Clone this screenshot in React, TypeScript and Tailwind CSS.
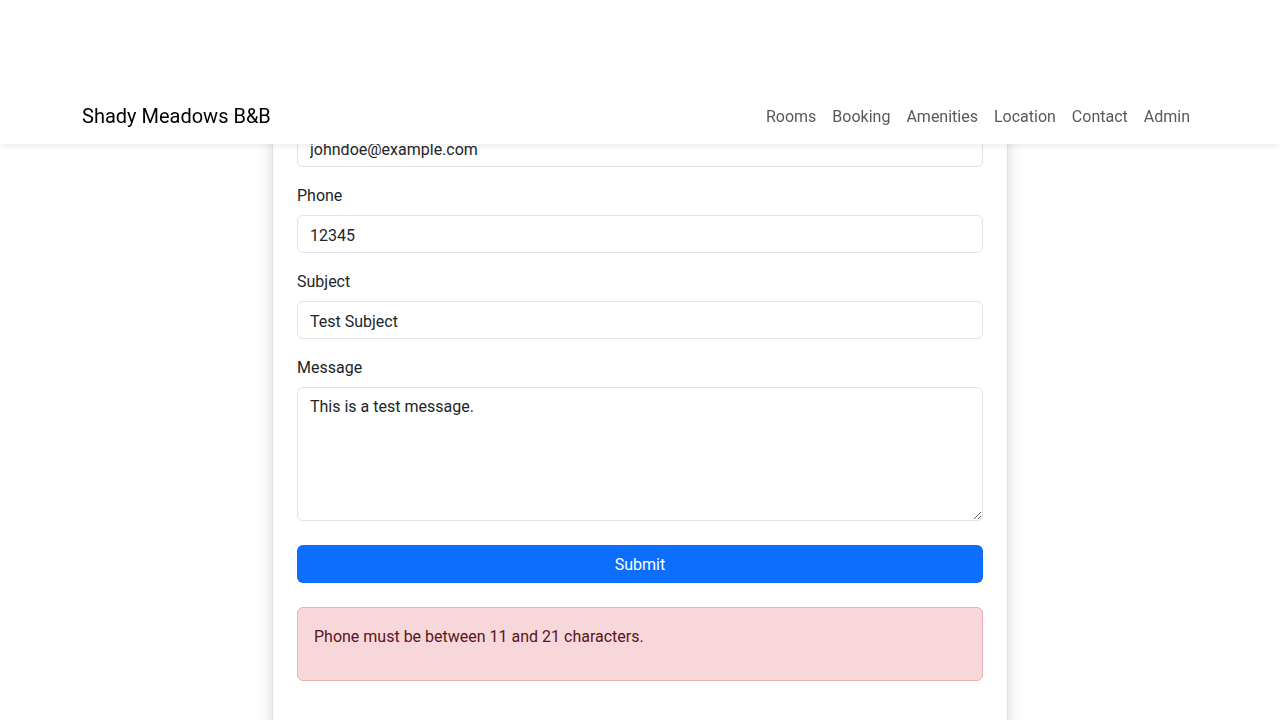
import React from "react";

const font = { fontFamily: "Roboto, 'Noto Sans', sans-serif" };

function Label({ children }: { children: React.ReactNode }) {
  return <label className="block h-6 pt-px mb-2 text-base leading-6 text-[#212529]">{children}</label>;
}

function Field({ label, value }: { label: string; value: string }) {
  return (
    <div className="mb-4">
      <Label>{label}</Label>
      <input
        readOnly
        value={value}
        className="block w-full h-[38px] px-3 pt-[7px] pb-[5px] text-base leading-6 text-[#212529] bg-white border border-[#dee2e6] rounded-md outline-none"
      />
    </div>
  );
}

export default function App() {
  return (
    <div className="min-h-screen bg-white text-[#212529]" style={font}>
      <nav className="fixed top-0 left-0 right-0 z-10 h-[144px] bg-white shadow-[0_2px_6px_rgba(0,0,0,0.08)]">
        <div className="mx-auto w-[1140px] px-3 h-full flex items-end pb-[13px] justify-between">
          <span className="text-[20px] leading-[30px] text-black">Shady Meadows B&amp;B</span>
          <ul className="flex items-center mb-[2px]">
            {["Rooms", "Booking", "Amenities", "Location", "Contact", "Admin"].map((l) => (
              <li key={l} className="px-2 text-base leading-6 text-[#595959]">
                {l}
              </li>
            ))}
          </ul>
        </div>
      </nav>
      <main className="pt-[72px]">
        <div className="mx-auto w-[736px] bg-white border border-[#dee2e6] rounded-md shadow-[0_8px_16px_rgba(0,0,0,0.15)] p-6 pb-10">
          <Field label="Email" value="johndoe@example.com" />
          <Field label="Phone" value="12345" />
          <Field label="Subject" value="Test Subject" />
          <div className="mb-6">
            <Label>Message</Label>
            <textarea
              readOnly
              value="This is a test message."
              className="block w-full h-[134px] px-3 pt-[7px] pb-[5px] text-base leading-6 text-[#212529] bg-white border border-[#dee2e6] rounded-md outline-none resize-y"
            />
          </div>
          <button className="block w-full h-[38px] pt-px bg-[#0d6efd] text-white text-base leading-6 rounded-md">
            Submit
          </button>
          <div className="mt-6 border border-[#f1aeb5] bg-[#f8d7da] text-[#58151c] rounded-md px-4 pt-[17px] pb-[15px]">
            <p className="mb-4 text-base leading-6">Phone must be between 11 and 21 characters.</p>
          </div>
          <div className="h-[200px]" />
        </div>
      </main>
    </div>
  );
}
